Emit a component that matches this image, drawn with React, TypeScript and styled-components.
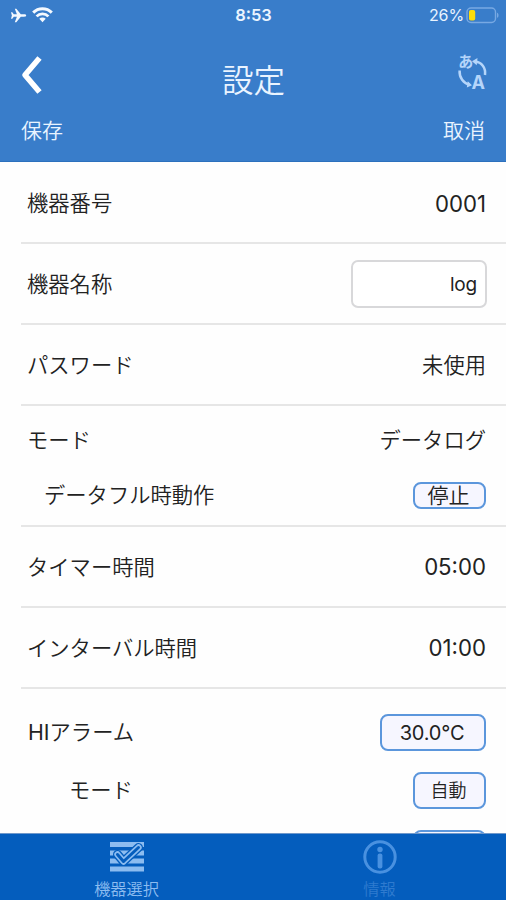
import React from "react";
import styled, { createGlobalStyle } from "styled-components";

const GlobalStyle = createGlobalStyle`
  * { box-sizing: border-box; }
  html, body { margin: 0; padding: 0; background: #fff; overflow: hidden; }
  button, input { font: inherit; color: inherit; margin: 0; }
`;

const Screen = styled.main`
  width: 506px;
  height: 900px;
  display: flex;
  flex-direction: column;
  overflow: hidden;
  background: #fefefe;
  color: #222;
  font-family: Inter, "Noto Sans CJK JP", sans-serif;
  font-size: 21.3px;
  font-weight: 350;
  line-height: 1;
  white-space: nowrap;
`;

const Header = styled.header`
  flex: none;
  height: 162px;
  display: flex;
  flex-direction: column;
  background: #397dca;
  border-bottom: 1px solid #2c70bd;
  color: #eaf4ff;
`;

const StatusBar = styled.div`
  height: 30px;
  display: grid;
  grid-template-columns: 1fr auto 1fr;
  align-items: center;
  padding: 0 7px 0 10px;
`;

const StatusGroup = styled.div<{ $end?: boolean }>`
  display: flex;
  align-items: center;
  gap: ${(p) => (p.$end ? 2 : 5)}px;
  justify-content: ${(p) => (p.$end ? "flex-end" : "flex-start")};
  font-size: 16px;
  font-weight: 400;
  letter-spacing: -0.1px;
`;

const Clock = styled.time`
  font-size: 16.5px;
  font-weight: 600;
  margin-right: 2px;
`;

const TitleBar = styled.div`
  height: 82px;
  display: grid;
  grid-template-columns: 70px 1fr 70px;
  align-items: center;
  padding: 0 18px 0 19px;
`;

const Title = styled.h1`
  margin: 20px 0 0;
  font-size: 31.5px;
  font-weight: inherit;
  text-align: center;
  line-height: 1;
`;

const IconButton = styled.button<{ $end?: boolean }>`
  display: flex;
  justify-content: ${(p) => (p.$end ? "flex-end" : "flex-start")};
  padding: ${(p) => (p.$end ? "2px 0 0" : "8px 0 0")};
  border: 0;
  background: none;
`;

const Actions = styled.div`
  display: flex;
  justify-content: space-between;
  align-items: center;
  height: 36px;
  padding: 0 21px 0 21px;
`;

const TextButton = styled.button`
  padding: 0;
  border: 0;
  background: none;
  font-size: 21px;
  line-height: 1;
`;

const List = styled.div`
  flex: 1;
  min-height: 0;
  overflow: hidden;
  display: flex;
  flex-direction: column;
  padding-left: 21px;
`;

const Section = styled.section<{ $pad?: string; $last?: boolean }>`
  flex: none;
  padding: ${(p) => p.$pad ?? "0"};
  border-bottom: ${(p) => (p.$last ? "0" : "2px solid #e6e6e6")};
`;

const Row = styled.div<{ $height: number; $indent?: number }>`
  height: ${(p) => p.$height}px;
  display: flex;
  align-items: center;
  justify-content: space-between;
  padding: 0 20px 0 ${(p) => 6 + (p.$indent ?? 0)}px;
`;

const Label = styled.span`
  padding-top: 2px;
`;

const LatinPrefix = styled.span`
  margin-left: 1px;
  font-weight: 400;
`;

const Value = styled.span<{ $numeric?: boolean }>`
  padding-top: 2px;
  font-size: ${(p) => (p.$numeric ? 22.2 : 21.3)}px;
  font-weight: ${(p) => (p.$numeric ? 400 : "inherit")};
`;

const NameInput = styled.input`
  width: 136px;
  height: 48px;
  margin-right: -1px;
  padding: 2px 8px 0;
  border: 2px solid #d8d8da;
  border-radius: 7px;
  background: #fff;
  font-size: 19px;
  font-weight: 400;
  letter-spacing: -0.2px;
  text-align: right;
  outline: none;
`;

const ValueButton = styled.button<{ $w: number; $h: number; $size: number; $numeric?: boolean }>`
  width: ${(p) => p.$w}px;
  height: ${(p) => p.$h}px;
  display: flex;
  align-items: center;
  justify-content: center;
  padding: ${(p) => (p.$h < 30 ? 0 : 2)}px 2px 0 0;
  border: 2px solid #5b96dc;
  border-radius: 8px;
  background: #f6f6ff;
  font-size: ${(p) => p.$size}px;
  font-weight: ${(p) => (p.$numeric ? 400 : "inherit")};
  letter-spacing: ${(p) => (p.$numeric ? "-0.2px" : "normal")};
  line-height: 1;
`;

const TabBar = styled.nav`
  flex: none;
  height: 67px;
  display: grid;
  grid-template-columns: 1fr 1fr;
  background: #045dbd;
  border-top: 1px solid #6f98cb;
`;

const Tab = styled.button<{ $active?: boolean }>`
  display: flex;
  flex-direction: column;
  align-items: center;
  gap: 7px;
  padding: 6px 0 0;
  border: 0;
  background: none;
  color: ${(p) => (p.$active ? "#8cbcf0" : "#2f7bcf")};
  font-size: 16.2px;
  line-height: 1;
`;

const Plane = () => (
  <svg width="17" height="15" viewBox="0 0 17 15" fill="#f4f9ff">
    <path d="M16.2 7.5c0-.8-.9-1.2-2-1.2h-3.4L6.3.8H4.8l2.1 5.5H3.8L2.3 4.2H1l.9 3.3L1 10.8h1.3l1.5-2.1h3.1l-2.1 5.5h1.5l4.5-5.5h3.4c1.1 0 2-.4 2-1.2z" />
  </svg>
);

const Wifi = () => (
  <svg width="21" height="16" viewBox="0 0 21 16" fill="none" stroke="#f4f9ff">
    <path d="M1.2 5.6A13.2 13.2 0 0 1 19.8 5.6" strokeWidth="3" />
    <path d="M4.6 9.4A8 8 0 0 1 16.4 9.4" strokeWidth="2.8" />
    <path d="M7.3 11.8a4.5 4.5 0 0 1 6.4 0l-3.2 3.4z" fill="#f4f9ff" stroke="none" />
  </svg>
);

const Battery = () => (
  <svg width="33" height="17" viewBox="0 0 33 17">
    <rect x="1" y="1" width="28.5" height="14.5" rx="4" fill="none" stroke="#78a9e3" strokeWidth="1.4" />
    <path d="M31 5.7c2 .6 2 4.5 0 5.1z" fill="#78a9e3" />
    <rect x="3" y="3" width="6.2" height="10.5" rx="1.8" fill="#fddd0a" />
  </svg>
);

const Back = () => (
  <svg width="26" height="42" viewBox="0 0 26 42" fill="none" stroke="#fff" strokeWidth="5.6">
    <path d="M20.5 4L6 21L20.5 38" strokeLinejoin="round" />
  </svg>
);

const Language = () => (
  <svg width="31" height="40" viewBox="0 -2 31 40" overflow="visible" fill="none" stroke="#b5d5fa" strokeWidth="2.5">
    <path d="M18 7.6C24.5 8.2 29 13.5 28 21" />
    <path d="M2.6 16.5C2.1 23.5 6.5 29.5 12.5 30.6" />
    <path d="M15 7.2L20.5 4L19.7 11.2z M15 31.2L10.8 27.3L9.8 33.6z" fill="#b5d5fa" stroke="none" />
    <text x="1.2" y="13.2" fontSize="15" fontWeight="700" fill="#b5d5fa" stroke="none">あ</text>
    <text x="14.6" y="35.3" fontSize="19" fontWeight="700" fill="#b5d5fa" stroke="none" textLength="13.5" lengthAdjust="spacingAndGlyphs">A</text>
  </svg>
);

const DeviceList = () => (
  <svg width="36" height="34" viewBox="0 0 36 34">
    <path d="M1 2h34v5H1zM1 10.5h34v5H1zM1 18.5h34v5H1zM1 26.5h34v5H1z" fill="#8cbcf0" />
    <path d="M8.5 14.5l6 7L29.5 7.5" fill="none" stroke="#045dbd" strokeWidth="9" strokeLinecap="round" strokeLinejoin="round" />
    <path d="M8.5 14.5l6 7L29.5 7.5" fill="none" stroke="#8cbcf0" strokeWidth="6.4" strokeLinecap="round" strokeLinejoin="round" />
    <path d="M8.5 14.5l6 7L29.5 7.5" fill="none" stroke="#045dbd" strokeWidth="3" strokeLinecap="round" strokeLinejoin="round" />
  </svg>
);

const Info = () => (
  <svg width="36" height="34" viewBox="0 0 36 34" fill="#4991e0">
    <circle cx="18" cy="17" r="15.2" fill="none" stroke="#4991e0" strokeWidth="3" />
    <circle cx="18" cy="9.5" r="2.7" />
    <rect x="15.6" y="13.5" width="4.8" height="15" rx="2" />
  </svg>
);

export default function App() {
  return (
    <>
      <GlobalStyle />
      <Screen>
        <Header>
          <StatusBar>
            <StatusGroup><Plane /><Wifi /></StatusGroup>
            <Clock>8:53</Clock>
            <StatusGroup $end><span>26%</span><Battery /></StatusGroup>
          </StatusBar>
          <TitleBar>
            <IconButton aria-label="戻る"><Back /></IconButton>
            <Title>設定</Title>
            <IconButton $end aria-label="言語"><Language /></IconButton>
          </TitleBar>
          <Actions>
            <TextButton>保存</TextButton>
            <TextButton>取消</TextButton>
          </Actions>
        </Header>

        <List>
          <Section $pad="2px 0 0">
            <Row $height={78}><Label>機器番号</Label><Value $numeric>0001</Value></Row>
          </Section>
          <Section>
            <Row $height={79}><Label>機器名称</Label><NameInput defaultValue="log" /></Row>
          </Section>
          <Section>
            <Row $height={79}><Label>パスワード</Label><Value>未使用</Value></Row>
          </Section>
          <Section $pad="6px 0 3px">
            <Row $height={56}><Label>モード</Label><Value>データログ</Value></Row>
            <Row $height={54} $indent={17}>
              <Label>データフル時動作</Label>
              <ValueButton $w={73} $h={27} $size={21}>停止</ValueButton>
            </Row>
          </Section>
          <Section>
            <Row $height={79}><Label>タイマー時間</Label><Value $numeric>05:00</Value></Row>
          </Section>
          <Section>
            <Row $height={79}><Label>インターバル時間</Label><Value $numeric>01:00</Value></Row>
          </Section>
          <Section $pad="14px 0 0" $last>
            <Row $height={58}>
              <Label><LatinPrefix>HI</LatinPrefix>アラーム</Label>
              <ValueButton $w={106} $h={37} $size={20} $numeric>30.0°C</ValueButton>
            </Row>
            <Row $height={58} $indent={42}>
              <Label>モード</Label>
              <ValueButton $w={73} $h={37} $size={18}>自動</ValueButton>
            </Row>
            <Row $height={58} $indent={42}>
              <Label />
              <ValueButton $w={73} $h={37} $size={18} />
            </Row>
          </Section>
        </List>

        <TabBar>
          <Tab $active><DeviceList />機器選択</Tab>
          <Tab><Info />情報</Tab>
        </TabBar>
      </Screen>
    </>
  );
}
